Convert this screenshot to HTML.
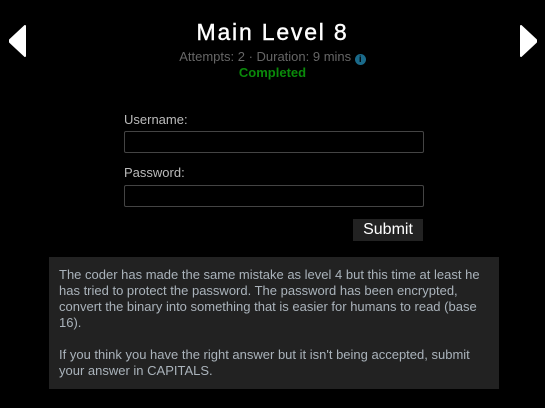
<!DOCTYPE html>
<html><head><style>
body{margin:0;width:545px;height:408px;background:#000;font-family:"Liberation Sans",sans-serif;position:relative;overflow:hidden}
.a{position:absolute}
h1{position:absolute;top:17px;left:0;width:545px;text-align:center;margin:0;font-size:23px;font-weight:normal;color:#fff;letter-spacing:1.8px;line-height:30px;-webkit-text-stroke:0.4px #fff}
.meta{top:49px;left:0;width:545px;text-align:center;font-size:13px;color:#666;line-height:16px}
.info{display:inline-block;width:11px;height:11px;border-radius:50%;background:#1a6a8a;color:#000;font-size:9px;font-weight:bold;line-height:11px;text-align:center;vertical-align:-1px}
.done{top:65px;left:0;width:545px;text-align:center;font-size:13px;font-weight:bold;color:#0a8a0a;line-height:16px}
.lbl{left:124px;font-size:13px;color:#bbb}
.inp{left:124px;width:298px;height:20px;border:1px solid #444;border-radius:2px;background:#000}
.btn{left:353px;top:219px;width:70px;height:22px;background:#222;color:#fff;font-size:16px;text-align:center;line-height:22px}
.box{left:49px;top:257px;width:430px;height:112px;padding:10px;background:#222;color:#aab3bb;font-size:13px;line-height:16px}
</style></head><body>
<svg class="a" style="left:9px;top:25px" width="17" height="32"><polygon points="16,1 16,31 1,17 1,15" fill="#fff" stroke="#fff" stroke-linejoin="round" stroke-width="2"/></svg>
<svg class="a" style="left:520px;top:25px" width="17" height="32"><polygon points="1,1 1,31 16,17 16,15" fill="#fff" stroke="#fff" stroke-linejoin="round" stroke-width="2"/></svg>
<h1>Main Level 8</h1>
<div class="a meta">Attempts: 2 · Duration: 9 mins <span class="info">i</span></div>
<div class="a done">Completed</div>
<div class="a lbl" style="top:112px">Username:</div>
<div class="a inp" style="top:131px"></div>
<div class="a lbl" style="top:165px">Password:</div>
<div class="a inp" style="top:185px"></div>
<div class="a btn">Submit</div>
<div class="a box">The coder has made the same mistake as level 4 but this time at least he has tried to protect the password. The password has been encrypted, convert the binary into something that is easier for humans to read (base 16).<br><br>If you think you have the right answer but it isn't being accepted, submit your answer in CAPITALS.</div>
</body></html>
